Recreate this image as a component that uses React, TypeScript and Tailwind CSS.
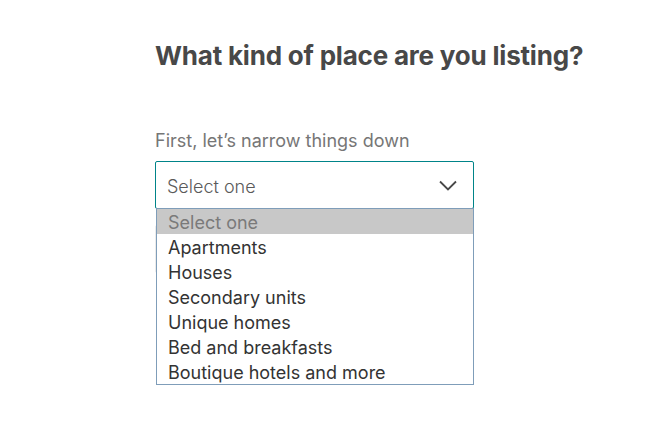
import React from "react";

const items = [
  "Apartments",
  "Houses",
  "Secondary units",
  "Unique homes",
  "Bed and breakfasts",
  "Boutique hotels and more",
];

export default function App() {
  return (
    <div
      className="w-[671px] h-[440px] bg-white overflow-hidden"
      style={{ fontFamily: "Inter, 'Noto Sans', sans-serif" }}
    >
      <div className="ml-[155px] w-[319px] pt-[38px] flex flex-col">
        <h1 className="text-[26px] leading-[36px] font-bold text-[#484848] whitespace-nowrap tracking-[-0.2px]">
          What kind of place are you listing?
        </h1>
        <div className="mt-[55px] text-[18px] leading-[24px] text-[#767676]">
          First, let’s narrow things down
        </div>
        <div className="relative mt-[8px] flex flex-col gap-[16px]">
          <div className="h-[48px] border border-[#008489] rounded-[2px] flex items-center justify-between pl-[11px] pr-[16px]">
            <span className="text-[18px] text-[#5a5a5a] font-light pt-[2px]">Select one</span>
            <svg width="18" height="11" viewBox="0 0 18 11" fill="none">
              <path d="M1 1.5 L9 9.5 L17 1.5" stroke="#484848" strokeWidth="1.8" />
            </svg>
          </div>
          <div className="h-[48px] border border-[#ebebeb] rounded-[2px]" />
          <div className="absolute left-[1px] top-[47px] w-[318px] flex flex-col border border-[#7f9db9] bg-white text-[18px] leading-[27px] text-[#333]">
            <div className="h-[25px] bg-[#c8c8c8] text-[#7a7a7a] pl-[11px] overflow-hidden">Select one</div>
            {items.map((t) => (
              <div key={t} className="h-[25px] pl-[11px] overflow-hidden">
                {t}
              </div>
            ))}
          </div>
        </div>
      </div>
    </div>
  );
}
